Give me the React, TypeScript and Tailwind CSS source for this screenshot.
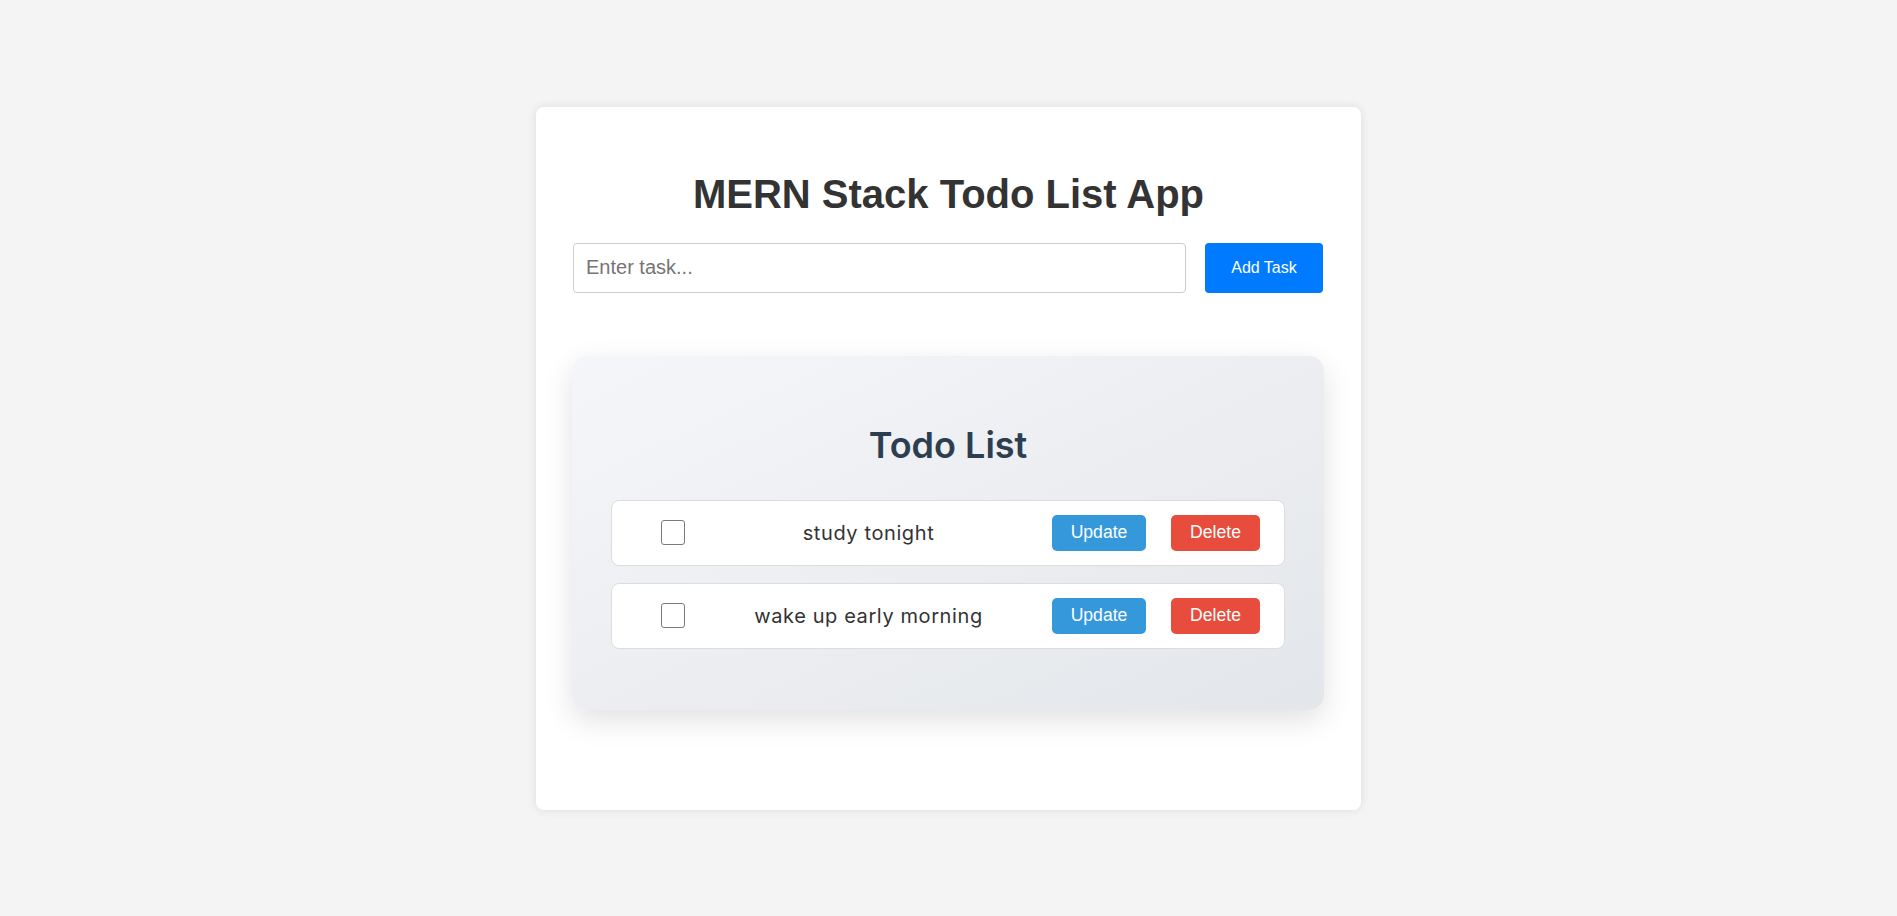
import React from "react";

const todos = ["study tonight", "wake up early morning"];

function TodoRow({ text }: { text: string }) {
  return (
    <div className="flex items-center h-[66px] bg-white border border-[#dcdcdc] rounded-[8px] pl-[49px] pr-[24px]">
      <div className="w-[24px] h-[25px] border-[1.5px] border-[#7a7a7a] rounded-[3px] bg-white shrink-0" />
      <span className="flex-1 text-center text-[20px] text-[#333] font-['Inter',sans-serif] tracking-[0.03em]">
        {text}
      </span>
      <div className="flex items-center gap-[25px] font-['Liberation_Sans',Arial,sans-serif]">
        <button className="w-[94px] h-[36px] rounded-[5px] bg-[#3498db] text-white text-[17.6px]">Update</button>
        <button className="w-[89px] h-[36px] rounded-[5px] bg-[#e74c3c] text-white text-[17.6px]">Delete</button>
      </div>
    </div>
  );
}

export default function App() {
  return (
    <div className="min-h-screen bg-[#f4f4f4] flex items-center justify-center font-['Liberation_Sans',Arial,sans-serif]">
      <div className="w-[825px] h-[703px] bg-white rounded-[8px] shadow-[0_0_10px_rgba(0,0,0,0.1)] px-[37px] pt-[64px]">
        <h1 className="text-[40px] leading-[46px] font-bold text-[#333] text-center">MERN Stack Todo List App</h1>
        <div className="flex mt-[26px] gap-[19px]">
          <input
            placeholder="Enter task..."
            className="w-[613px] h-[50px] border border-[#ccc] rounded-[4px] px-[12px] text-[20px] text-[#333] placeholder:text-[#757575] outline-none"
          />
          <button className="w-[118px] h-[50px] bg-[#007bff] text-white text-[16px] rounded-[4px]">Add Task</button>
        </div>
        <div className="mt-[63px] -ml-px w-[752px] h-[354px] rounded-[15px] bg-gradient-to-br from-[#f5f6f9] to-[#e3e6ea] shadow-[0_10px_30px_rgba(0,0,0,0.12)] px-[39px] pt-[69px]">
          <h2 className="text-[36px] leading-[40px] font-semibold text-[#2c3e50] text-center font-['Inter',sans-serif] mb-[35px]">
            Todo List
          </h2>
          <div className="flex flex-col gap-[17px]">
            {todos.map((t) => (
              <TodoRow key={t} text={t} />
            ))}
          </div>
        </div>
      </div>
    </div>
  );
}
